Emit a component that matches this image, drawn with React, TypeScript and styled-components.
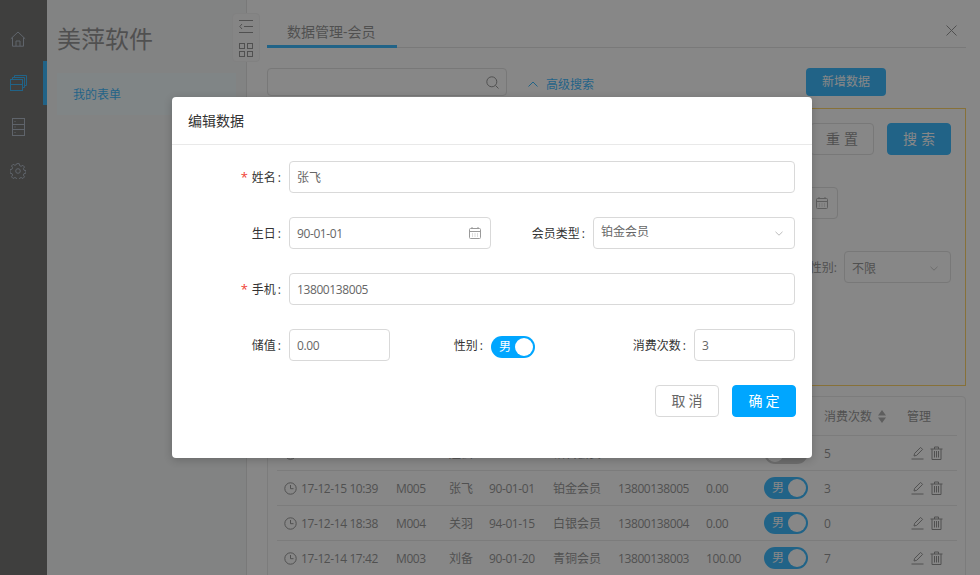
import styled, { createGlobalStyle } from "styled-components";

const GlobalStyle = createGlobalStyle`
  html, body {
    margin: 0;
    padding: 0;
    height: 100%;
    overflow: hidden;
  }
  #root {
    height: 100%;
  }
  * {
    box-sizing: border-box;
  }
  body {
    font-family: "Open Sans", "Noto Sans CJK SC", sans-serif;
    font-size: 12px;
    color: #333;
  }
`;

const BLUE = "#00a6ff";
const MUTED = "#777";
const RAIL_ICON = "#9ca8ba";

const rows = [
    { time: "17-12-15 10:40", no: "M006", name: "赵云", birth: "90-01-01", type: "钻石会员", phone: "13800138006", value: "0.00", male: false, count: "5" },
    { time: "17-12-15 10:39", no: "M005", name: "张飞", birth: "90-01-01", type: "铂金会员", phone: "13800138005", value: "0.00", male: true, count: "3" },
    { time: "17-12-14 18:38", no: "M004", name: "关羽", birth: "94-01-15", type: "白银会员", phone: "13800138004", value: "0.00", male: true, count: "0" },
    { time: "17-12-14 17:42", no: "M003", name: "刘备", birth: "90-01-20", type: "青铜会员", phone: "13800138003", value: "100.00", male: true, count: "7" },
];

const CalendarIcon = () => (
    <svg width="12" height="12" viewBox="0 0 12 12" fill="none" stroke="#9a9a9a" strokeWidth="1">
        <rect x="0.5" y="1.5" width="11" height="10" rx="1" />
        <path d="M0.5 4.5h11M3 0v2M9 0v2" />
        <path d="M3 7h1M5.5 7h1M8 7h1M3 9h1M5.5 9h1M8 9h1" stroke="#bbb" />
    </svg>
);

const ChevronDown = () => (
    <svg width="8" height="5" viewBox="0 0 8 5" fill="none" stroke="#bbb" strokeWidth="1">
        <path d="M0.5 0.8L4 4.2 7.5 0.8" />
    </svg>
);

const ClockIcon = () => (
    <svg width="13" height="13" viewBox="0 0 13 13" fill="none" stroke={MUTED} strokeWidth="1">
        <circle cx="6.5" cy="6.5" r="5.7" />
        <path d="M6.5 3v3.7h3" />
    </svg>
);

const EditIcon = () => (
    <svg width="13" height="14" viewBox="0 0 13 14" fill="none" stroke={MUTED} strokeWidth="1">
        <path d="M3 10l.6-2.6L9.6 1.4l2 2-6 6z" />
        <path d="M0.5 13h12" />
    </svg>
);

const TrashIcon = () => (
    <svg width="13" height="14" viewBox="0 0 13 14" fill="none" stroke={MUTED} strokeWidth="1">
        <path d="M0.5 3h12M4.5 3V1h4v2M2 3v10.5h9V3M4.5 5v6.5M6.5 5v6.5M8.5 5v6.5" />
    </svg>
);

const Switch = ({ on }: { on: boolean }) => (
    <Toggle on={on}>
        <span>{on ? "男" : "女"}</span>
        <ToggleKnob on={on} />
    </Toggle>
);

const App = () => {
    return (
        <>
            <GlobalStyle />
            <Page>
                <Rail>
                    <RailItem>
                        <svg width="16" height="16" viewBox="0 0 16 16" fill="none" stroke={RAIL_ICON} strokeWidth="1">
                            <path d="M0.8 7.8L8 1l7.2 6.8M2.5 6.5v8.700h11V6.500M6 15v-5h4v5" />
                        </svg>
                    </RailItem>
                    <RailItem active>
                        <svg width="17" height="16" viewBox="0 0 17 16" fill="none" stroke={BLUE} strokeWidth="1">
                            <rect x="0.5" y="4.5" width="12" height="11" />
                            <path d="M0.5 9.5h12M2.5 4.5v-2h12v10h-2M4.5 2.5v-2h12v10h-2" />
                        </svg>
                    </RailItem>
                    <RailItem>
                        <svg width="13" height="18" viewBox="0 0 13 18" fill="none" stroke={RAIL_ICON} strokeWidth="1">
                            <rect x="0.5" y="0.5" width="12" height="17" />
                            <path d="M0.5 6.5h12M0.5 11.5h12M2.5 3.5h1M2.5 9h1M2.5 14.5h1" />
                        </svg>
                    </RailItem>
                    <RailItem>
                        <svg width="16" height="16" viewBox="0 0 16 16" fill="none" stroke={RAIL_ICON} strokeWidth="1">
                            <circle cx="8" cy="8" r="2.3" />
                            <path d="M6.8 0.6h2.4l.4 2 1.5.7 1.8-1 1.6 1.7-1.1 1.7.6 1.5 2 .5v2.4l-2 .5-.6 1.5 1.1 1.7-1.6 1.7-1.8-1-1.5.7-.4 2H6.8l-.4-2-1.5-.7-1.8 1-1.6-1.7 1.1-1.7-.6-1.5-2-.5V6.7l2-.5.6-1.5-1.1-1.7 1.6-1.7 1.8 1 1.5-.7z" />
                        </svg>
                    </RailItem>
                </Rail>

                <Sidebar>
                    <Logo>美萍软件</Logo>
                    <SideItem>我的表单</SideItem>
                    <Collapse>
                        <svg width="14" height="13" viewBox="0 0 14 13" fill="none" stroke={MUTED} strokeWidth="1">
                            <path d="M0 0.5h14M5 6.5h9M0 12.5h14M3 4L0.8 6.5 3 9" />
                        </svg>
                        <svg width="14" height="14" viewBox="0 0 14 14" fill="none" stroke={MUTED} strokeWidth="1">
                            <rect x="0.5" y="0.5" width="5" height="5" />
                            <rect x="8.5" y="0.5" width="5" height="5" />
                            <rect x="0.5" y="8.5" width="5" height="5" />
                            <rect x="8.5" y="8.5" width="5" height="5" />
                        </svg>
                    </Collapse>
                </Sidebar>

                <Main>
                    <TabBar>
                        <Tab>数据管理-会员</Tab>
                        <CloseIcon width="11" height="11" viewBox="0 0 11 11" stroke={MUTED} strokeWidth="1">
                            <path d="M0.5 0.5l10 10M10.5 0.5l-10 10" />
                        </CloseIcon>
                    </TabBar>

                    <SearchBar>
                        <SearchInput>
                            <svg width="13" height="13" viewBox="0 0 13 13" fill="none" stroke={MUTED} strokeWidth="1">
                                <circle cx="5.8" cy="5.8" r="5" />
                                <path d="M9.5 9.5l3 3" />
                            </svg>
                        </SearchInput>
                        <AdvancedLink>
                            <svg width="10" height="6" viewBox="0 0 10 6" fill="none" stroke={BLUE} strokeWidth="1">
                                <path d="M0.5 5.5L5 1l4.5 4.5" />
                            </svg>
                            高级搜索
                        </AdvancedLink>
                        <AddButton>新增数据</AddButton>
                    </SearchBar>

                    <FilterBox>
                        <FilterRow>
                            <FilterButton>重置</FilterButton>
                            <FilterButton primary>搜索</FilterButton>
                        </FilterRow>
                        <DateRow>
                            <DateStub>
                                <CalendarIcon />
                            </DateStub>
                        </DateRow>
                        <SelectRow>
                            <SelectLabel>性别:</SelectLabel>
                            <SelectStub>
                                不限
                                <ChevronDown />
                            </SelectStub>
                        </SelectRow>
                    </FilterBox>

                    <TableCard>
                        <TableHead>
                            <HeadCell>消费次数
                                <svg width="8" height="13" viewBox="0 0 8 13" fill="#999">
                                    <path d="M4 0l4 5.5H0zM4 13L0 7.5h8z" />
                                </svg>
                            </HeadCell>
                            <HeadCell>管理</HeadCell>
                        </TableHead>
                        {rows.map((r) => (
                            <TableRow key={r.no}>
                                <TimeCell><ClockIcon /><Num>{r.time}</Num></TimeCell>
                                <Num>{r.no}</Num>
                                <span>{r.name}</span>
                                <Num>{r.birth}</Num>
                                <span>{r.type}</span>
                                <Num>{r.phone}</Num>
                                <Num>{r.value}</Num>
                                <Switch on={r.male} />
                                <Num>{r.count}</Num>
                                <Actions><EditIcon /><TrashIcon /></Actions>
                            </TableRow>
                        ))}
                    </TableCard>
                </Main>

                <Mask>
                    <Modal>
                        <ModalHeader>编辑数据</ModalHeader>
                        <ModalBody>
                            <FormRow>
                                <Field>
                                    <Label width={117} required>姓名</Label>
                                    <InputBox width={506}>张飞</InputBox>
                                </Field>
                            </FormRow>
                            <FormRow>
                                <Field>
                                    <Label width={117}>生日</Label>
                                    <InputBox width={202}>
                                        <Num>90-01-01</Num>
                                        <CalendarIcon />
                                    </InputBox>
                                </Field>
                                <Field>
                                    <Label width={102}>会员类型</Label>
                                    <SelectBox>
                                        <SelectValue>铂金会员</SelectValue>
                                        <ChevronDown />
                                    </SelectBox>
                                </Field>
                            </FormRow>
                            <FormRow>
                                <Field>
                                    <Label width={117} required>手机</Label>
                                    <InputBox width={506}><Num>13800138005</Num></InputBox>
                                </Field>
                            </FormRow>
                            <FormRow>
                                <Field>
                                    <Label width={117}>储值</Label>
                                    <InputBox width={101}><Num>0.00</Num></InputBox>
                                </Field>
                                <Field>
                                    <Label width={101}>性别</Label>
                                    <SwitchSlot><Switch on /></SwitchSlot>
                                </Field>
                                <Field>
                                    <Label width={159}>消费次数</Label>
                                    <InputBox width={101}><Num>3</Num></InputBox>
                                </Field>
                            </FormRow>
                            <ModalFooter>
                                <ModalButton>取消</ModalButton>
                                <ModalButton primary>确定</ModalButton>
                            </ModalFooter>
                        </ModalBody>
                    </Modal>
                </Mask>
            </Page>
        </>
    );
};

const Page = styled.div`
  position: relative;
  display: flex;
  width: 980px;
  height: 575px;
  overflow: hidden;
  background: #fff;
`;

const Rail = styled.div`
  width: 47px;
  flex-shrink: 0;
  padding-top: 17px;
  background: #4b4c49;
`;

const RailItem = styled.div<{ active?: boolean }>`
  display: flex;
  align-items: center;
  justify-content: center;
  height: 44px;
  padding-right: 7px;
  border-right: 4px solid ${(props) => (props.active ? BLUE : "transparent")};
`;

const Sidebar = styled.div`
  position: relative;
  width: 200px;
  flex-shrink: 0;
  padding: 0 10px;
  background: #f3f4f6;
  border-right: 1px solid #ddd;
`;

const Logo = styled.div`
  height: 73px;
  padding-top: 21px;
  font-size: 24px;
  line-height: 36px;
  color: ${MUTED};
`;

const SideItem = styled.div`
  width: 179px;
  height: 42px;
  padding-left: 16px;
  line-height: 43px;
  color: ${BLUE};
  background: #eefbfd;
`;

const Collapse = styled.div`
  position: absolute;
  top: 13px;
  left: 185px;
  display: flex;
  flex-direction: column;
  align-items: center;
  gap: 10px;
  width: 28px;
  height: 49px;
  padding-top: 6px;
  background: #f9f9f9;
  border: 1px solid #efefef;
  border-radius: 4px;
`;

const Main = styled.div`
  flex: 1;
  min-width: 0;
  padding: 0 14px 0 20px;
  color: ${MUTED};
`;

const TabBar = styled.div`
  display: flex;
  align-items: flex-end;
  justify-content: space-between;
  height: 48px;
  border-bottom: 1px solid #ddd;
`;

const Tab = styled.div`
  width: 130px;
  height: 48px;
  margin-bottom: -1px;
  padding: 22px 0 0 20px;
  font-size: 14px;
  line-height: 20px;
  white-space: nowrap;
  border-bottom: 3px solid ${BLUE};
`;

const CloseIcon = styled.svg`
  margin: 0 9px 11px 0;
  fill: none;
`;

const SearchBar = styled.div`
  display: flex;
  align-items: center;
  height: 28px;
  margin-top: 20px;
`;

const SearchInput = styled.div`
  display: flex;
  align-items: center;
  justify-content: flex-end;
  width: 240px;
  height: 28px;
  padding-right: 7px;
  border: 1px solid #d9d9d9;
  border-radius: 4px;
`;

const AdvancedLink = styled.div`
  display: flex;
  align-items: center;
  gap: 8px;
  margin: 4px 0 0 21px;
  color: ${BLUE};
`;

const AddButton = styled.div`
  width: 80px;
  height: 28px;
  margin: 0 80px 0 auto;
  line-height: 28px;
  text-align: center;
  color: #fff;
  background: ${BLUE};
  border-radius: 4px;
`;

const FilterBox = styled.div`
  height: 278px;
  margin-top: 12px;
  padding: 14px 14px 0 0;
  border: 1px solid #ffc73d;
`;

const FilterRow = styled.div`
  display: flex;
  justify-content: flex-end;
  gap: 13px;
`;

const FilterButton = styled.div<{ primary?: boolean }>`
  width: 64px;
  height: 32px;
  padding-left: 4px;
  font-size: 14px;
  letter-spacing: 4px;
  line-height: 30px;
  text-align: center;
  color: ${(props) => (props.primary ? "#fff" : MUTED)};
  background: ${(props) => (props.primary ? BLUE : "#fff")};
  border: 1px solid ${(props) => (props.primary ? BLUE : "#d9d9d9")};
  border-radius: 4px;
`;

const DateRow = styled.div`
  display: flex;
  justify-content: flex-end;
  margin-top: 32px;
  padding-right: 113px;
`;

const DateStub = styled.div`
  display: flex;
  align-items: center;
  justify-content: flex-end;
  width: 200px;
  height: 32px;
  padding-right: 9px;
  border: 1px solid #d9d9d9;
  border-radius: 4px;
`;

const SelectRow = styled.div`
  display: flex;
  align-items: center;
  justify-content: flex-end;
  margin-top: 32px;
`;

const SelectLabel = styled.span`
  margin-right: 7px;
`;

const SelectStub = styled.div`
  display: flex;
  align-items: center;
  justify-content: space-between;
  width: 107px;
  height: 32px;
  padding: 2px 12px 0 7px;
  border: 1px solid #d9d9d9;
  border-radius: 4px;
`;

const TableCard = styled.div`
  height: 190px;
  margin-top: 10px;
  padding: 0 8px 0 9px;
  border: 1px solid #e4e4e4;
  border-radius: 4px;
`;

const TableHead = styled.div`
  display: grid;
  grid-template-columns: 83px 50px;
  justify-content: end;
  align-items: center;
  height: 38px;
`;

const HeadCell = styled.div`
  display: flex;
  align-items: center;
  gap: 6px;
`;

const TableRow = styled.div`
  display: grid;
  grid-template-columns: 112px 53px 40px 64px 65px 88px 58px 60px 83px 50px;
  align-items: center;
  height: 35px;
  padding-left: 7px;
  border-top: 1px solid #e4e4e4;
`;

const TimeCell = styled.div`
  display: flex;
  align-items: center;
  gap: 4px;
`;

const Num = styled.span`
  letter-spacing: -0.4px;
`;

const Actions = styled.div`
  display: flex;
  align-items: center;
  gap: 6px;
  padding-left: 4px;
`;

const Toggle = styled.div<{ on: boolean }>`
  position: relative;
  width: 44px;
  height: 22px;
  padding-left: 8px;
  line-height: 22px;
  color: #fff;
  background: ${(props) => (props.on ? BLUE : "#bfbfbf")};
  border-radius: 11px;
`;

const ToggleKnob = styled.span<{ on: boolean }>`
  position: absolute;
  top: 2px;
  left: ${(props) => (props.on ? "24px" : "2px")};
  width: 18px;
  height: 18px;
  background: #fff;
  border-radius: 50%;
`;

const Mask = styled.div`
  position: absolute;
  inset: 0;
  background: rgba(55, 55, 55, 0.6);
`;

const Modal = styled.div`
  position: absolute;
  top: 97px;
  left: 172px;
  width: 640px;
  height: 361px;
  background: #fff;
  border-radius: 4px;
  box-shadow: 0 2px 8px rgba(0, 0, 0, 0.2);
`;

const ModalHeader = styled.div`
  height: 48px;
  padding-left: 16px;
  font-size: 14px;
  line-height: 47px;
  border-bottom: 1px solid #e9e9e9;
`;

const ModalBody = styled.div`
  padding: 16px 16px 0 0;
`;

const FormRow = styled.div`
  display: flex;
  align-items: center;
  margin-bottom: 24px;
`;

const Field = styled.div`
  display: flex;
  align-items: center;
`;

const SwitchSlot = styled.div`
  padding-top: 4px;
`;

const Label = styled.label<{ width: number; required?: boolean }>`
  width: ${(props) => props.width}px;
  flex-shrink: 0;
  text-align: right;

  &::before {
    content: ${(props) => (props.required ? '"*"' : "none")};
    margin-right: 4px;
    font-size: 13px;
    color: #f04134;
  }

  &::after {
    content: ":";
    margin: 0 8px 0 2px;
  }
`;

const InputBox = styled.div<{ width: number }>`
  display: flex;
  align-items: center;
  justify-content: space-between;
  width: ${(props) => props.width}px;
  height: 32px;
  padding: 0 9px 0 7px;
  color: #666;
  border: 1px solid #d9d9d9;
  border-radius: 4px;
`;

const SelectBox = styled(InputBox).attrs({ width: 202 })`
  padding-right: 11px;
`;

const SelectValue = styled.span`
  margin-top: -4px;
`;

const ModalFooter = styled.div`
  display: flex;
  justify-content: flex-end;
  gap: 13px;
  margin-top: 2px;
`;

const ModalButton = styled.div<{ primary?: boolean }>`
  width: 64px;
  height: 32px;
  padding-left: 3px;
  font-size: 14px;
  letter-spacing: 3px;
  line-height: 30px;
  text-align: center;
  color: ${(props) => (props.primary ? "#fff" : "#666")};
  background: ${(props) => (props.primary ? BLUE : "#fff")};
  border: 1px solid ${(props) => (props.primary ? BLUE : "#d9d9d9")};
  border-radius: 4px;
`;

export default App;
